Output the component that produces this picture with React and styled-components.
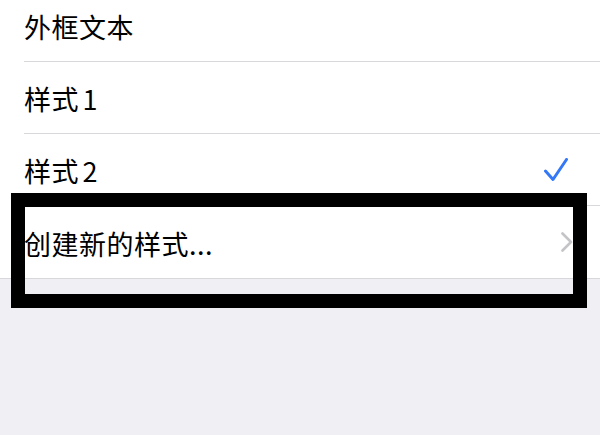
import React from "react";
import styled, { createGlobalStyle } from "styled-components";

const GlobalStyle = createGlobalStyle`
  html, body {
    margin: 0;
    padding: 0;
    background-color: #efeff4;
    font-family: "Noto Sans CJK SC", "Noto Sans", sans-serif;
  }
`;

const Screen = styled.div`
  position: relative;
  width: 600px;
  height: 435px;
  overflow: hidden;
  background-color: #efeff4;
`;

const List = styled.div`
  display: flex;
  flex-direction: column;
  margin-top: -10px;
  background-color: #ffffff;
  border-bottom: 1px solid #d8d8dc;
`;

const Row = styled.div`
  display: flex;
  align-items: center;
  height: 72px;
  padding-left: 24px;
`;

const RowInner = styled.div`
  flex: 1;
  height: 100%;
  display: flex;
  align-items: center;
  justify-content: space-between;
  padding-right: ${(p) => p.$right || 32}px;
  border-bottom: ${(p) => (p.$last ? "none" : "1px solid #d8d8dc")};
  box-sizing: border-box;
`;

const Label = styled.span`
  font-size: 27px;
  color: #000000;
  letter-spacing: 0.5px;
  word-spacing: -3px;
  line-height: 1;
  padding-top: 2px;
`;

const Highlight = styled.div`
  position: absolute;
  left: 11px;
  top: 193px;
  width: 576px;
  height: 115px;
  border: 14px solid #000000;
  box-sizing: border-box;
`;

const Check = () => (
  <svg width="24" height="24" viewBox="0 0 24 24" fill="none">
    <path
      d="M1.5 13 L9 21.5 L22.5 1.5"
      stroke="#3478f6"
      strokeWidth="3"
      strokeLinecap="round"
      strokeLinejoin="round"
    />
  </svg>
);

const Chevron = () => (
  <svg width="12" height="20" viewBox="0 0 12 20" fill="none">
    <path
      d="M1.5 1.5 L10 10 L1.5 18.5"
      stroke="#c4c4c8"
      strokeWidth="2.6"
      strokeLinecap="round"
      strokeLinejoin="round"
    />
  </svg>
);

export default function App() {
  return (
    <>
      <GlobalStyle />
      <Screen>
        <List>
          <Row>
            <RowInner>
              <Label>外框文本</Label>
            </RowInner>
          </Row>
          <Row>
            <RowInner>
              <Label>样式 1</Label>
            </RowInner>
          </Row>
          <Row>
            <RowInner>
              <Label>样式 2</Label>
              <Check />
            </RowInner>
          </Row>
          <Row>
            <RowInner $last $right={27}>
              <Label>创建新的样式...</Label>
              <Chevron />
            </RowInner>
          </Row>
        </List>
        <Highlight />
      </Screen>
    </>
  );
}
